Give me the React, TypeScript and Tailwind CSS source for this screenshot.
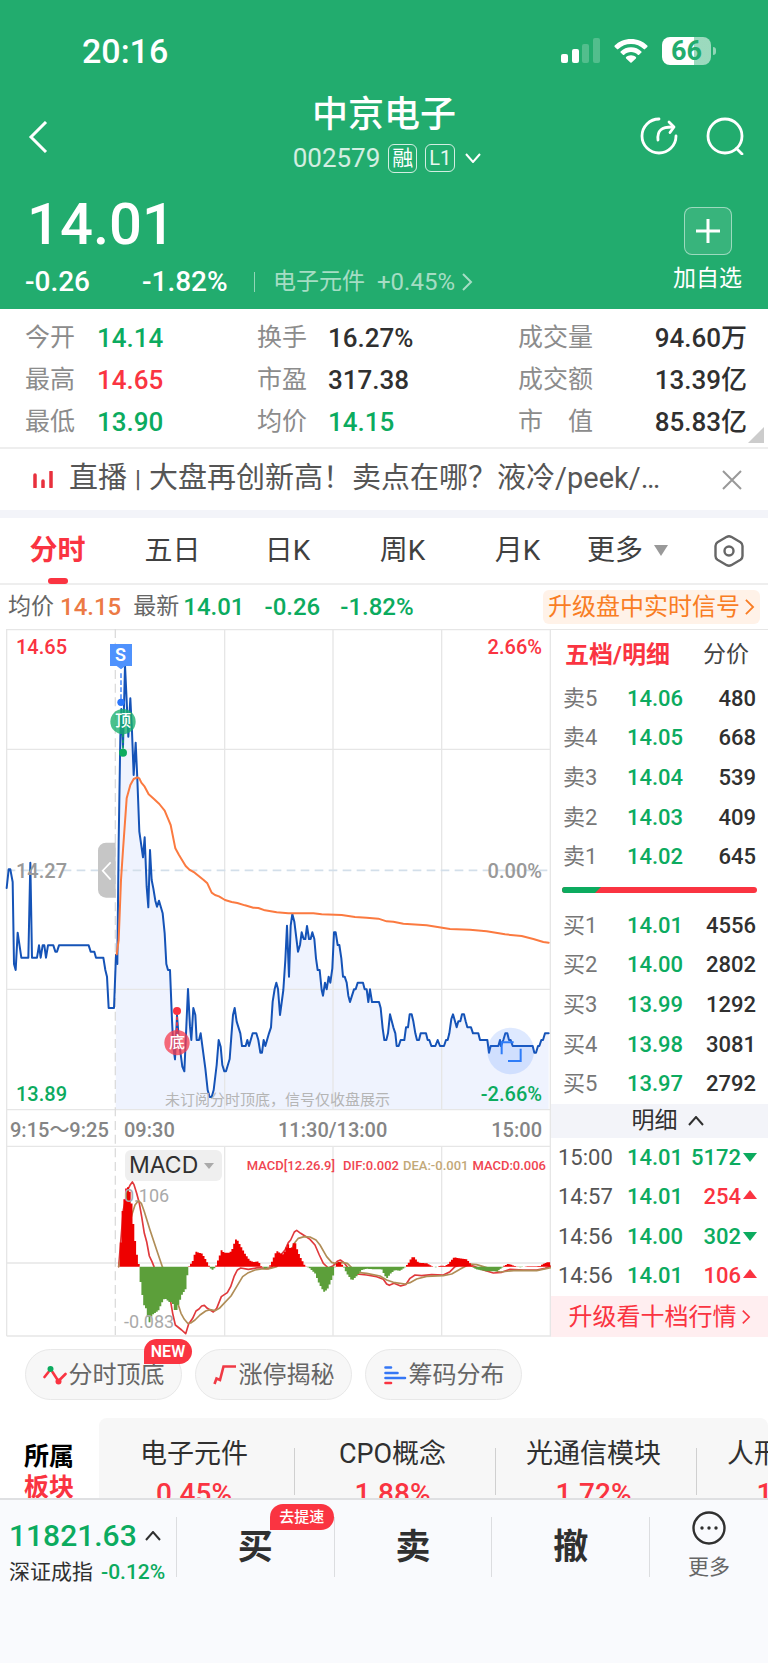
import type { ReactNode } from "react";

type Pt = [number, number];

const shift = (pts: Pt[], dx: number, dy = 0): Pt[] => pts.map(([x, y]) => [x + dx, y + dy]);
const toPoints = (pts: Pt[]) => pts.map((p) => p.join(",")).join(" ");

/* Chart geometry is in thirds of a pixel: the canvas is 1653 x 2124 units. */
const preOpen: Pt[] = [
  [20, 777], [26, 721], [31, 721], [38, 759], [42, 1005], [47, 1023], [53, 911], [64, 986], [85, 986], [91, 701],
  [96, 986], [111, 986], [117, 949], [122, 986], [128, 949], [133, 949], [138, 986], [144, 949], [160, 949],
  [166, 968], [171, 968], [177, 949], [266, 949], [272, 968], [283, 968], [288, 986], [310, 986], [316, 1023],
  [321, 1043], [326, 1137], [342, 1137], [348, 978],
];

const price: Pt[] = [
  [348, 978], [352, 1005], [356, 640], [361, 323], [364, 240], [369, 353], [375, 108], [385, 323], [391, 208],
  [396, 308], [401, 438], [407, 341], [412, 450], [418, 608], [429, 685], [434, 625], [440, 773], [445, 835], [450, 663],
  [455, 753], [460, 778], [466, 815], [471, 833], [477, 815], [488, 853], [494, 913], [499, 1005], [504, 1023],
  [510, 1023], [516, 1173], [520, 1253], [525, 1291], [531, 1158], [537, 1238], [547, 1313], [553, 1327],
  [564, 1080], [570, 1193], [574, 1233], [580, 1137], [586, 1158], [590, 1233], [597, 1233], [602, 1213],
  [616, 1318], [623, 1383], [629, 1404], [635, 1404], [641, 1383], [650, 1308], [656, 1233], [662, 1253],
  [667, 1308], [673, 1327], [678, 1327], [689, 1290], [694, 1223], [699, 1158], [704, 1137], [710, 1178],
  [721, 1213], [726, 1251], [737, 1251], [742, 1233], [747, 1251], [758, 1213], [769, 1213], [775, 1233],
  [781, 1271], [786, 1271], [791, 1233], [796, 1251], [807, 1213], [813, 1195], [818, 1118], [824, 1080],
  [829, 1061], [834, 1080], [840, 1158],
  ...shift([
    [40, 1083], [46, 993], [51, 890], [57, 1043], [62, 890], [67, 855], [73, 878], [84, 968], [90, 948], [95, 910],
    [101, 930], [106, 930], [111, 891], [117, 930], [122, 930], [127, 910], [133, 930], [138, 988], [143, 1023],
    [149, 1023], [155, 1083], [159, 1100], [165, 1061], [170, 1081], [176, 1043], [181, 1061], [187, 1018],
    [192, 910], [197, 910], [203, 948], [208, 948], [214, 988], [219, 1043], [224, 1043], [230, 1061], [235, 1100],
    [240, 1119], [246, 1100], [252, 1081], [257, 1081], [263, 1061], [279, 1061], [284, 1081], [290, 1081],
    [295, 1119], [300, 1081], [306, 1119], [327, 1119], [332, 1137], [338, 1198], [343, 1233], [349, 1233],
    [354, 1213], [360, 1156], [370, 1195], [376, 1213], [380, 1251], [386, 1251], [392, 1233], [403, 1233],
    [408, 1195], [414, 1195], [419, 1156], [425, 1156], [430, 1177], [436, 1213], [441, 1233], [447, 1233],
    [452, 1213], [468, 1213], [473, 1233], [478, 1233], [484, 1251], [496, 1251], [503, 1233], [510, 1251],
    [522, 1251], [528, 1233], [533, 1233], [538, 1213], [544, 1170], [549, 1156], [555, 1177], [560, 1195],
    [565, 1177], [571, 1177], [576, 1156], [582, 1156], [587, 1177], [592, 1195], [603, 1195], [609, 1213],
    [625, 1213], [630, 1233], [652, 1233], [657, 1271], [662, 1251], [685, 1251], [690, 1233], [693, 1251],
    [700, 1233], [706, 1213], [712, 1213], [717, 1233], [722, 1233], [728, 1251], [788, 1251], [793, 1271],
    [798, 1271], [804, 1251], [808, 1251], [814, 1233], [819, 1233], [825, 1213], [836, 1213],
  ], 810),
];

const average: Pt[] = [
  [350, 976], [356, 933], [360, 830], [363, 753], [369, 663], [380, 508], [391, 468], [401, 450], [412, 445],
  [418, 448], [424, 461], [434, 473], [446, 496], [462, 510], [478, 525], [494, 545], [505, 571], [512, 588],
  [526, 658], [537, 678], [557, 711], [568, 722], [584, 731], [611, 753], [622, 763], [635, 791], [645, 798],
  [657, 802], [675, 813], [695, 819], [712, 822], [735, 829], [760, 836], [775, 837], [795, 844], [830, 850],
  [865, 853], [940, 853], [965, 856], [1025, 858], [1065, 864], [1100, 866], [1135, 869], [1160, 877], [1180, 878],
  [1210, 884], [1280, 889], [1350, 900], [1410, 902], [1460, 907], [1515, 916], [1565, 921], [1600, 930],
  [1630, 939], [1646, 941],
];

const MACD_TOP = 1413;
const ZERO = 1913;

const dif: Pt[] = shift([
  [356, 500], [370, 330], [383, 270], [391, 254], [397, 246], [402, 254], [410, 280], [418, 310], [425, 350],
  [433, 400], [440, 425], [448, 468], [456, 485], [462, 500], [490, 560], [512, 605], [518, 640], [526, 675], [545, 690],
  [557, 701], [566, 672], [578, 655], [588, 633], [597, 627], [605, 618], [613, 616], [622, 625], [640, 636],
  [650, 625], [664, 590], [682, 578], [692, 560], [702, 530], [712, 510], [722, 504], [745, 508], [775, 503],
  [800, 506], [815, 503], [830, 470], [845, 462], [855, 450], [865, 428], [872, 420], [883, 396], [890, 391],
  [902, 400], [915, 408], [930, 418], [945, 435], [958, 465], [970, 490], [985, 504], [1000, 497], [1012, 484],
  [1021, 480], [1032, 488], [1045, 505], [1070, 522], [1100, 525], [1130, 530], [1150, 538], [1160, 552],
  [1168, 556], [1182, 550], [1202, 558], [1218, 553], [1230, 535], [1245, 525], [1265, 527], [1295, 524],
  [1330, 525], [1350, 515], [1365, 500], [1380, 495], [1400, 493], [1420, 498], [1450, 510], [1480, 519],
  [1505, 517], [1530, 508], [1570, 510], [1610, 510], [1635, 505], [1653, 498],
], 0, MACD_TOP);

const dea: Pt[] = shift([
  [356, 500], [380, 400], [397, 340], [405, 315], [415, 302], [424, 310], [433, 335], [450, 390], [470, 450],
  [487, 500], [512, 565], [535, 615], [543, 640], [553, 658], [563, 670], [572, 669], [585, 660], [600, 645], [617, 633],
  [630, 629], [645, 632], [658, 625], [672, 610], [693, 588], [710, 560], [728, 530], [745, 518], [765, 510],
  [785, 507], [805, 507], [830, 500], [850, 480], [870, 460], [883, 430], [895, 415], [913, 410], [930, 411],
  [948, 420], [960, 435], [980, 470], [995, 487], [1005, 490], [1025, 487], [1042, 490], [1055, 503], [1072, 517],
  [1100, 520], [1140, 528], [1160, 540], [1180, 547], [1215, 552], [1230, 548], [1250, 537], [1280, 529],
  [1330, 527], [1355, 522], [1385, 505], [1410, 492], [1430, 494], [1460, 503], [1500, 516], [1550, 511],
  [1610, 512], [1653, 503],
], 0, MACD_TOP);

const histogram: Pt[] = [
  [354, -8], [358, 4], [362, 70], [366, 160], [371, 184], [376, 232], [383, 240], [389, 225], [396, 180], [402, 100],
  [407, 65], [413, 18], [418, 2], [420, -35], [426, -80], [432, -115], [438, -125], [444, -155], [448, -168],
  [455, -146], [475, -132], [490, -98], [497, -97], [510, -108], [517, -105], [522, -125], [527, -137], [533, -120],
  [540, -100], [548, -78], [556, -72], [560, -40], [565, -2], [568, 2], [580, 20], [586, 47], [592, 43], [605, 40],
  [615, 25], [627, 2], [630, -4], [637, -10], [643, -5], [648, 3], [658, 30], [664, 50], [672, 42], [690, 42],
  [700, 58], [705, 82], [712, 80], [722, 62], [735, 38], [750, 18], [760, 14], [775, 16], [783, 2], [795, -6],
  [805, -2], [812, 6], [822, 30], [830, 48], [838, 42], [850, 36], [860, 60], [865, 68], [872, 50], [880, 70],
  [886, 70], [892, 50], [900, 30], [915, 2], [927, -3], [945, -20], [955, -45], [965, -65], [973, -76], [982, -68],
  [990, -50], [1000, -25], [1004, -3], [1010, 10], [1019, 16], [1027, 5], [1032, -3], [1040, -20], [1056, -42],
  [1070, -28], [1085, -10], [1100, -6], [1120, -8], [1145, -8], [1155, -28], [1162, -35], [1170, -22], [1185, -10],
  [1200, -12], [1215, -2], [1225, 10], [1235, 28], [1243, 28], [1255, 12], [1280, 10], [1295, 2], [1307, -2],
  [1320, 3], [1335, 2], [1345, 8], [1355, 20], [1362, 28], [1385, 24], [1400, 22], [1410, 10], [1418, -2],
  [1430, -8], [1460, -14], [1490, -14], [1505, -4], [1513, 3], [1525, 9], [1535, 5], [1545, 2], [1560, -2],
  [1580, 1], [1600, 1], [1620, 2], [1630, 8], [1640, 13], [1653, 14],
];

function valueAt(x: number) {
  for (let i = 1; i < histogram.length; i++) {
    const [x0, y0] = histogram[i - 1];
    const [x1, y1] = histogram[i];
    if (x <= x1) return y0 + ((y1 - y0) * (x - x0)) / (x1 - x0);
  }
  return 0;
}

const bars = Array.from({ length: 240 }, (_, i) => {
  const x = 354 + i * 5.4;
  return { x, v: valueAt(x + 2.7) };
});
const barPath = (sign: number) =>
  bars
    .filter((b) => b.v * sign > 0)
    .map((b) => `M${b.x.toFixed(1)} ${ZERO}h5.7V${(ZERO - b.v).toFixed(1)}h-5.7z`)
    .join("");

function Chart() {
  return (
    <svg viewBox="0 0 1653 2124" className="block h-auto w-full" aria-hidden="true">
      <polygon points={`347,1440 ${toPoints(price)} 1646,1440`} fill="#eff3fe" />
      <g stroke="#e6e6e6" strokeWidth="4" fill="none">
        <path d="M20 2H1653M20 361H1653M20 1081H1653M20 1442H1653M20 1552H1653M20 1902H1653M20 2121H1653" />
        <path d="M20 0V2121M674 0V1442M999 0V1442M1325 0V1442M1651 0V2121M674 1552V2121M999 1552V2121M1325 1552V2121" />
        <path d="M346 0V2121" strokeDasharray="27 14" stroke="#dcdcdc" />
      </g>
      <path d="M20 724H1653" stroke="#d3dfea" strokeWidth="5" strokeDasharray="26 16" />
      <g fill="none" strokeLinejoin="round" strokeLinecap="round">
        <polyline points={toPoints(preOpen)} stroke="#1553b7" strokeWidth="6" />
        <polyline points={toPoints(price)} stroke="#1553b7" strokeWidth="6" />
        <polyline points={toPoints(average)} stroke="#fb7a40" strokeWidth="6" />
        <polyline points={toPoints(dif)} stroke="#e0393c" strokeWidth="5" />
        <polyline points={toPoints(dea)} stroke="#b08d57" strokeWidth="5" />
      </g>
      <path d={barPath(1)} fill="#ee0000" />
      <path d={barPath(-1)} fill="#5c9f3a" />

      <path d="M347 641H318a24 24 0 0 0-24 24V782a24 24 0 0 0 24 24H347z" fill="#c6c6c6" />
      <path d="M332 700L308 725L332 752" fill="none" stroke="#fff" strokeWidth="5" />

      <path d="M363 133V215" stroke="#5c96fb" strokeWidth="5" strokeDasharray="14 7" />
      <path d="M330 45H396V111H376L363 121L350 111H330z" fill="#4f92fd" />
      <circle cx="363" cy="220" r="11" fill="#2a76fb" />
      <path d="M369 315V371" stroke="#0c9c6a" strokeWidth="5" strokeDasharray="10 7" />
      <circle cx="369" cy="278" r="38" fill="#17b06b" fillOpacity="0.78" />
      <circle cx="369" cy="371" r="12" fill="#0cab5f" />
      <path d="M531 1146V1210" stroke="#fa3441" strokeWidth="5" strokeDasharray="10 7" />
      <circle cx="531" cy="1146" r="12" fill="#fa3441" />
      <circle cx="531" cy="1241" r="38" fill="#f53a4c" fillOpacity="0.75" />

      <circle cx="1532" cy="1266" r="70" fill="#3b7dff" fillOpacity="0.17" />
      <path d="M1505 1276V1240H1541M1524 1296H1562V1259" fill="none" stroke="#2e7cf8" strokeWidth="6" />
    </svg>
  );
}

function Chevron({ className, d, box = "0 0 12 20", w = 2 }: { className: string; d: string; box?: string; w?: number }) {
  return (
    <svg viewBox={box} className={className} fill="none" stroke="currentColor" strokeWidth={w} aria-hidden="true">
      <path d={d} />
    </svg>
  );
}

const RIGHT = "M2 2L10 10L2 18";

const stats = [
  ["今开", "14.14", "text-[#0cab5f]", "换手", "16.27%", "text-[#303030]", "成交量", "94.60万"],
  ["最高", "14.65", "text-[#fa3441]", "市盈", "317.38", "text-[#303030]", "成交额", "13.39亿"],
  ["最低", "13.90", "text-[#0cab5f]", "均价", "14.15", "text-[#0cab5f]", "市\u3000值", "85.83亿"],
];

const sells = [["卖5", "14.06", "480"], ["卖4", "14.05", "668"], ["卖3", "14.04", "539"], ["卖2", "14.03", "409"], ["卖1", "14.02", "645"]];
const buys = [["买1", "14.01", "4556"], ["买2", "14.00", "2802"], ["买3", "13.99", "1292"], ["买4", "13.98", "3081"], ["买5", "13.97", "2792"]];
const trades: [string, string, string, boolean][] = [
  ["15:00", "14.01", "5172", false],
  ["14:57", "14.01", "254", true],
  ["14:56", "14.00", "302", false],
  ["14:56", "14.01", "106", true],
];

function Orders({ rows }: { rows: string[][] }) {
  return (
    <table className="h-[198px] w-full text-[22px] leading-6">
      <tbody>
        {rows.map(([label, p, qty]) => (
          <tr key={label}>
            <th scope="row" className="w-[76px] p-0 pl-3 text-left font-normal text-[#777]">{label}</th>
            <td className="p-0 font-medium text-[#0cab5f]">{p}</td>
            <td className="p-0 pr-3 text-right font-medium text-[#303030]">{qty}</td>
          </tr>
        ))}
      </tbody>
    </table>
  );
}

function Label({ className, children }: { className: string; children: ReactNode }) {
  return <span className={`absolute whitespace-nowrap leading-6 ${className}`}>{children}</span>;
}

function Chip({ icon, children, badge }: { icon: ReactNode; children: ReactNode; badge?: string }) {
  return (
    <button className="relative flex h-[51px] w-[157px] items-center justify-center gap-0.5 rounded-full border border-[#e8e8e8] bg-[#f7f7f7] text-2xl leading-none text-[#666]">
      {icon}
      <span>{children}</span>
      {badge && (
        <span className="absolute -top-[11px] -right-[11px] flex h-[25px] w-12 items-center justify-center rounded-full rounded-bl-sm bg-[#fa3441] text-base leading-none font-semibold text-white">
          {badge}
        </span>
      )}
    </button>
  );
}

function Header() {
  return (
    <header className="h-[309px] bg-[#22ac6e] text-white">
      <div className="flex h-[90px] items-center justify-between pt-3 pr-[52px] pl-[82px]">
        <span className="text-[34px] leading-none font-medium">20:16</span>
        <div className="flex items-center gap-3.5">
          <svg viewBox="0 0 39 26" className="h-[26px] w-[39px]" fill="#fff" aria-hidden="true">
            <rect x="0" y="16" width="7" height="9" rx="2" />
            <rect x="11" y="11" width="7" height="14" rx="2" />
            <rect x="21" y="6" width="7" height="19" rx="2" opacity="0.22" />
            <rect x="32" y="0" width="7" height="25" rx="2" opacity="0.22" />
          </svg>
          <svg viewBox="0 0 34 26" className="h-[26px] w-[34px]" fill="#fff" aria-hidden="true">
            <path d="M17 1C10.500 1 4.600 3.500.7 7.600c-.4.400-.4.900 0 1.300l2.300 2.200c.4.400.9.400 1.300 0C7.500 7.900 12 6 17 6s9.500 1.900 12.700 5.100c.4.400.9.400 1.300 0l2.300-2.200c.4-.4.400-.9 0-1.300C29.400 3.500 23.500 1 17 1z" />
            <path d="M17 9.200c-4 0-7.700 1.600-10.400 4.200-.4.400-.4.900 0 1.200l2.300 2.200c.4.400.9.400 1.300 0 1.800-1.700 4.200-2.700 6.800-2.700s5 1 6.800 2.700c.4.400.9.400 1.300 0l2.300-2.200c.4-.3.400-.8 0-1.200C24.700 10.800 21 9.200 17 9.200z" />
            <path d="M17 17.300c-1.900 0-3.600.7-4.900 1.800-.4.400-.4.900 0 1.300l4.300 4.200c.3.300.8.300 1.200 0l4.300-4.200c.4-.4.400-.9 0-1.300-1.300-1.100-3-1.800-4.900-1.800z" />
          </svg>
          <div className="flex items-center">
            <div className="flex h-7 w-[49px] items-center justify-center rounded-lg bg-linear-to-r from-white from-66% to-white/55 to-66%">
              <span className="text-[27px] leading-none font-bold text-[#22ac6e]">66</span>
            </div>
            <span className="ml-0.5 h-2 w-[3px] rounded-r-full bg-white/50" />
          </div>
        </div>
      </div>

      <div className="grid h-[90px] grid-cols-[130px_1fr_130px] items-center px-6">
        <button aria-label="返回" className="w-8 pt-1 pl-1">
          <Chevron className="h-8 w-5" box="0 0 20 32" d="M18 1L3 16L18 31" w={3} />
        </button>
        <div className="flex flex-col items-center">
          <h1 className="text-4xl leading-[42px] font-medium">中京电子</h1>
          <div className="mt-1 flex items-center gap-2 pl-1.5">
            <span className="text-[26px] leading-9 text-white/80">002579</span>
            <span className="flex size-[29px] items-center justify-center rounded-md border border-white/80 text-[21px] leading-none">融</span>
            <span className="flex h-[28px] w-[30px] items-center justify-center rounded-md border border-white/80 text-xl leading-none text-white/90">L1</span>
            <Chevron className="ml-0.5 h-2.5 w-4" box="0 0 16 10" d="M1 1L8 9L15 1" />
          </div>
        </div>
        <div className="flex justify-end gap-7 pt-0.5">
          <button aria-label="分享">
            <svg viewBox="0 0 38 38" className="size-[38px]" fill="none" stroke="#fff" strokeWidth="2.800" strokeLinecap="round" strokeLinejoin="round" aria-hidden="true">
              <path d="M19 2A17 17 0 1 0 36 19" />
              <path d="M18 23C17 13 22 10 32 10" />
              <path d="M29 5L34 10L30 15.500" />
            </svg>
          </button>
          <button aria-label="搜索">
            <svg viewBox="0 0 38 38" className="size-[38px]" fill="none" stroke="#fff" strokeWidth="2.800" strokeLinecap="round" aria-hidden="true">
              <circle cx="19" cy="19" r="17" />
              <path d="M30.500 31.500L36 37" />
            </svg>
          </button>
        </div>
      </div>

      <div className="flex justify-between pr-[26px] pl-[25px]">
        <div>
          <div className="pt-2 pl-0.5 text-[58px] leading-[72px] font-medium">14.01</div>
          <div className="mt-1 flex items-center text-[28px] leading-9 font-medium">
            <span className="w-[117px]">-0.26</span>
            <span className="w-28">-1.82%</span>
            <span className="h-5 w-px bg-white/50" />
            <a href="#sector" className="ml-[18px] flex items-center text-[23px] font-normal text-white/60">
              电子元件<span className="ml-3 text-2xl">+0.45%</span>
              <Chevron className="ml-1.5 h-5 w-3" d={RIGHT} />
            </a>
          </div>
        </div>
        <button className="flex flex-col items-center pt-[27px]">
          <span className="flex size-12 items-center justify-center rounded-lg border border-white/50 bg-white/10">
            <Chevron className="size-6" box="0 0 24 24" d="M12 0V24M0 12H24" w={3} />
          </span>
          <span className="mt-2 text-[23px] leading-8">加自选</span>
        </button>
      </div>
    </header>
  );
}

const tabs = ["五日", "日K", "周K", "月K"];

export default function App() {
  return (
    <div className="min-h-screen w-full overflow-hidden bg-white font-['Roboto','Noto_Sans_CJK_SC',sans-serif]">
      <Header />

      <section className="relative border-b-2 border-[#eee] pt-2 pb-1">
        <table className="w-full table-fixed text-[26px] leading-[42px]">
          <colgroup>
            <col className="w-[97px]" /><col className="w-[160px]" /><col className="w-[71px]" />
            <col className="w-[190px]" /><col className="w-[90px]" /><col />
          </colgroup>
          <tbody>
            {stats.map((r) => (
              <tr key={r[0]}>
                <th scope="row" className="p-0 pl-[25px] text-left text-[25px] font-normal text-[#8c8c8c]">{r[0]}</th>
                <td className={`p-0 font-medium ${r[2]}`}>{r[1]}</td>
                <th scope="row" className="p-0 text-left text-[25px] font-normal text-[#8c8c8c]">{r[3]}</th>
                <td className={`p-0 font-medium ${r[5]}`}>{r[4]}</td>
                <th scope="row" className="p-0 text-left text-[25px] font-normal whitespace-nowrap text-[#8c8c8c]">{r[6]}</th>
                <td className="p-0 pr-[21px] text-right font-medium text-[#303030]">{r[7]}</td>
              </tr>
            ))}
          </tbody>
        </table>
        <svg viewBox="0 0 16 16" className="absolute right-1 bottom-1 size-4" aria-hidden="true"><path d="M16 0V16H0z" fill="#ccc" /></svg>
      </section>

      <section className="flex h-[61px] items-center pr-[26px] pl-[33px]">
        <svg viewBox="0 0 20 17" className="mr-4 h-[17px] w-5" aria-hidden="true">
          <path d="M2 4V16M10 10V16M18 1V16" stroke="#e8303d" strokeWidth="3.500" strokeLinecap="round" />
        </svg>
        <a href="#live" className="flex-1 text-[29px] leading-10 whitespace-nowrap text-[#555]">
          直播<span className="text-[22px]">丨</span>大盘再创新高！卖点在哪？液冷/peek/…
        </a>
        <button aria-label="关闭" className="text-[#999]">
          <Chevron className="size-5" box="0 0 20 20" d="M1 1L19 19M19 1L1 19" />
        </button>
      </section>
      <div className="h-2 bg-[#f3f4f9]" />

      <nav className="flex h-[67px] items-center border-b-2 border-[#eee] text-[28px] leading-10 text-[#404040]">
        <button className="relative w-[115px] text-center font-bold text-[#fa3441]">
          分时
          <span className="absolute top-[47px] left-1/2 h-1.5 w-5 -translate-x-1/2 rounded-full bg-[#fa3441]" />
        </button>
        {tabs.map((t) => (
          <button key={t} className="w-[115px] text-center">{t}</button>
        ))}
        <button className="flex flex-1 items-center gap-2.5 pl-3">
          更多
          <svg viewBox="0 0 16 11" className="h-[11px] w-4" aria-hidden="true"><path d="M1 0H15L8 11z" fill="#999" /></svg>
        </button>
        <button aria-label="设置" className="mr-6">
          <svg viewBox="0 0 30 32" className="h-8 w-[30px]" fill="none" stroke="#666" strokeWidth="2.400" strokeLinejoin="round" aria-hidden="true">
            <path d="M12.800 1.800Q15 .8 17.200 1.800L26.500 7.200Q28.500 8.500 28.500 11V21Q28.500 23.500 26.500 24.800L17.200 30.200Q15 31.200 12.800 30.200L3.500 24.800Q1.500 23.500 1.500 21V11Q1.500 8.500 3.500 7.200z" />
            <circle cx="15" cy="16" r="4.500" />
          </svg>
        </button>
      </nav>

      <div className="flex h-11 items-center justify-between px-2 text-2xl leading-8 whitespace-nowrap">
        <div className="flex items-center font-medium text-[#0cab5f]">
          <span className="text-[23px] font-normal text-[#666]">均价</span>
          <span className="ml-1.5 text-[#ec7a45]">14.15</span>
          <span className="ml-3 text-[23px] font-normal text-[#666]">最新</span>
          <span className="ml-1">14.01</span>
          <span className="ml-5">-0.26</span>
          <span className="ml-5">-1.82%</span>
        </div>
        <button className="flex h-[34px] w-[217px] items-center justify-center gap-1 rounded-md bg-[#fff2e8] text-2xl text-[#f97d24]">
          升级盘中实时信号
          <Chevron className="h-[18px] w-[11px]" d={RIGHT} />
        </button>
      </div>

      <main className="grid grid-cols-[minmax(0,1fr)_217px]">
        <section className="relative text-xl font-medium text-[#858585]" aria-label="分时图">
          <Chart />
          <Label className="top-1.5 left-4 text-[#fa3441]">14.65</Label>
          <Label className="top-1.5 right-[9px] text-[#fa3441]">2.66%</Label>
          <Label className="top-[230px] left-4 text-[#999]">14.27</Label>
          <Label className="top-[230px] right-[9px] text-[#999]">0.00%</Label>
          <Label className="top-[453px] left-4 text-[#0cab5f]">13.89</Label>
          <Label className="top-[453px] right-[9px] text-[#0cab5f]">-2.66%</Label>
          <Label className="top-[14px] left-[115px] text-lg font-semibold text-white">S</Label>
          <Label className="top-[80px] left-[115px] text-base text-white">顶</Label>
          <Label className="top-[402px] left-[169px] text-base text-white">底</Label>
          <Label className="top-[459px] left-[165px] text-[15px] font-normal text-[#b5b5b5]">未订阅分时顶底，信号仅收盘展示</Label>
          <Label className="top-[489px] left-2.5">9:15～9:25</Label>
          <Label className="top-[489px] left-[124px]">09:30</Label>
          <Label className="top-[489px] left-[278px]">11:30/13:00</Label>
          <Label className="top-[489px] right-[9px]">15:00</Label>
          <button className="absolute top-[521px] left-[125px] flex h-[31px] w-[97px] items-center justify-between rounded-md bg-[#efefef] pr-2 pl-1 font-['Inter'] text-[23px] leading-none font-normal text-[#303030]">
            MACD
            <svg viewBox="0 0 10 6" className="h-1.5 w-2.5" aria-hidden="true"><path d="M0 0H10L5 6z" fill="#aaa" /></svg>
          </button>
          <div className="absolute top-[525px] right-[5px] flex gap-1 text-[13px] leading-6 whitespace-nowrap text-[#f04450]">
            <span className="mr-1">MACD[12.26.9]</span>
            <span>DIF:0.002</span>
            <span className="text-[#c2a878]">DEA:-0.001</span>
            <span>MACD:0.006</span>
          </div>
          <Label className="top-[555px] left-[124px] text-lg font-normal text-[#aaa]">0.106</Label>
          <Label className="top-[681px] left-[124px] text-lg font-normal text-[#aaa]">-0.083</Label>
        </section>

        <aside className="flex flex-col border-t border-[#e6e6e6]">
          <div className="flex h-[49px] items-center justify-between pr-[19px] pl-3.5 text-[23px] leading-8">
            <button className="text-2xl font-bold text-[#fa3441]">五档/明细</button>
            <button className="text-[#444]">分价</button>
          </div>
          <Orders rows={sells} />
          <div className="mx-[11px] mt-[10px] mb-[13px] flex h-1.5 overflow-hidden rounded-full bg-[#fa3441]">
            <span className="-ml-2 h-full w-11 -skew-x-45 bg-[#0cab5f]" />
          </div>
          <Orders rows={buys} />
          <button className="flex h-[34px] items-center justify-center gap-2.5 bg-[#f3f4f9] pl-4 text-[23px] leading-8 text-[#303030]">
            明细
            <Chevron className="h-2.5 w-4" box="0 0 16 10" d="M1 9L8 1L15 9" />
          </button>
          <table className="h-[158px] w-full text-[22px] leading-6 font-medium">
            <tbody>
              {trades.map(([t, p, q, up], i) => (
                <tr key={i}>
                  <td className="w-[76px] p-0 pl-[7px] font-normal text-[#555]">{t}</td>
                  <td className="p-0 text-[#0cab5f]">{p}</td>
                  <td className={`p-0 pr-[11px] ${up ? "text-[#fa3441]" : "text-[#0cab5f]"}`}>
                    <span className="flex items-center justify-end gap-0.5">
                      {q}
                      <svg viewBox="0 0 14 9" className={up ? "mb-1.5 h-[9px] w-3.5" : "h-[9px] w-3.5"} fill="currentColor" aria-hidden="true">
                        <path d={up ? "M0 9H14L7 0z" : "M0 0H14L7 9z"} />
                      </svg>
                    </span>
                  </td>
                </tr>
              ))}
            </tbody>
          </table>
          <button className="flex flex-1 items-center justify-center gap-1 bg-[#ffeef0] text-2xl leading-8 text-[#fa3441]">
            升级看十档行情
            <Chevron className="h-4 w-2.5" d={RIGHT} />
          </button>
        </aside>
      </main>

      <div className="flex gap-[13px] px-[25px] pt-3">
        <Chip
          badge="NEW"
          icon={
            <svg viewBox="0 0 24 20" className="h-5 w-6" fill="none" aria-hidden="true">
              <path d="M1.500 12L5.500 7M9.500 7L14 14M17 14.500L22.500 9" stroke="#fa3441" strokeWidth="2.600" strokeLinecap="round" />
              <circle cx="7.500" cy="4" r="3" fill="#0cab5f" />
              <circle cx="15.500" cy="16.500" r="3" fill="#fa3441" />
            </svg>
          }
        >
          分时顶底
        </Chip>
        <Chip
          icon={
            <svg viewBox="0 0 24 20" className="h-5 w-6" fill="none" aria-hidden="true">
              <path d="M1.500 19L3.500 13.500L7 15L10.500 1.500H23" stroke="#f03a45" strokeWidth="2.600" />
            </svg>
          }
        >
          涨停揭秘
        </Chip>
        <Chip
          icon={
            <svg viewBox="0 0 24 20" className="h-5 w-6" fill="none" strokeWidth="2.600" strokeLinecap="round" aria-hidden="true">
              <path d="M2.500 2.500H8M2.500 8H14.500M2.500 13H22" stroke="#3577f5" />
              <path d="M2.500 18H8" stroke="#fa3441" />
            </svg>
          }
        >
          筹码分布
        </Chip>
      </div>

      <section id="sector" className="mt-[18px] flex h-20 overflow-hidden">
        <h2 className="w-[99px] shrink-0 pt-[23px] pl-6 text-[25px] leading-[31px] font-bold text-black">
          所属<br /><span className="text-[#fa3441]">板块</span>
        </h2>
        <div className="flex flex-1 overflow-hidden rounded-t-lg bg-[#f7f7f7] whitespace-nowrap">
          {[["电子元件", "0.45%"], ["CPO概念", "1.88%"], ["光通信模块", "1.72%"], ["人形机器人", "1.15%"]].map(([n, v]) => (
            <a key={n} href="#sector" className="relative flex w-[201px] shrink-0 flex-col items-center pt-4 pr-1.5 first:w-[196px]">
              <span className="text-[27px] leading-10 text-[#303030]">{n}</span>
              <span className="mt-0.5 text-[28px] leading-9 font-medium text-[#fa3441]">{v}</span>
              <span className="absolute top-[30px] right-0 h-[47px] w-px bg-[#d0d0d0]" />
            </a>
          ))}
        </div>
      </section>

      <footer className="flex h-[165px] border-t-2 border-[#dfe0e2] bg-[#f9fafd]">
        <button className="flex w-[176px] shrink-0 flex-col pt-[18px] pl-[9px] whitespace-nowrap">
          <span className="flex items-center gap-2 text-[30px] leading-9 font-medium text-[#0cab5f]">
            11821.63
            <Chevron className="h-2.5 w-4 text-[#303030]" box="0 0 16 10" d="M1 9L8 1L15 9" />
          </span>
          <span className="flex items-center gap-2 text-[21px] leading-9 text-[#303030]">
            深证成指<span className="font-medium text-[#0cab5f]">-0.12%</span>
          </span>
        </button>
        {["买", "卖", "撤"].map((t) => (
          <button key={t} className="relative mt-[17px] flex h-[60px] flex-1 items-center justify-center border-l border-[#dcdde0] text-[35px] leading-none font-bold text-[#303030]">
            {t}
            {t === "买" && (
              <span className="absolute -top-[13px] right-0 flex h-[26px] w-16 items-center justify-center rounded-full rounded-bl-sm bg-[#fa3441] text-[15px] leading-none font-medium text-white">
                去提速
              </span>
            )}
          </button>
        ))}
        <button className="mt-[17px] flex h-[60px] w-[119px] flex-col items-center border-l border-[#dcdde0] text-[21px] leading-8 text-[#666]">
          <svg viewBox="0 0 34 34" className="-mt-1.5 size-[34px] shrink-0" aria-hidden="true">
            <circle cx="17" cy="17" r="15.500" fill="none" stroke="#303030" strokeWidth="2.400" />
            <circle cx="10" cy="17" r="1.700" fill="#303030" />
            <circle cx="17" cy="17" r="1.700" fill="#303030" />
            <circle cx="24" cy="17" r="1.700" fill="#303030" />
          </svg>
          <span className="mt-1.5">更多</span>
        </button>
      </footer>
    </div>
  );
}
